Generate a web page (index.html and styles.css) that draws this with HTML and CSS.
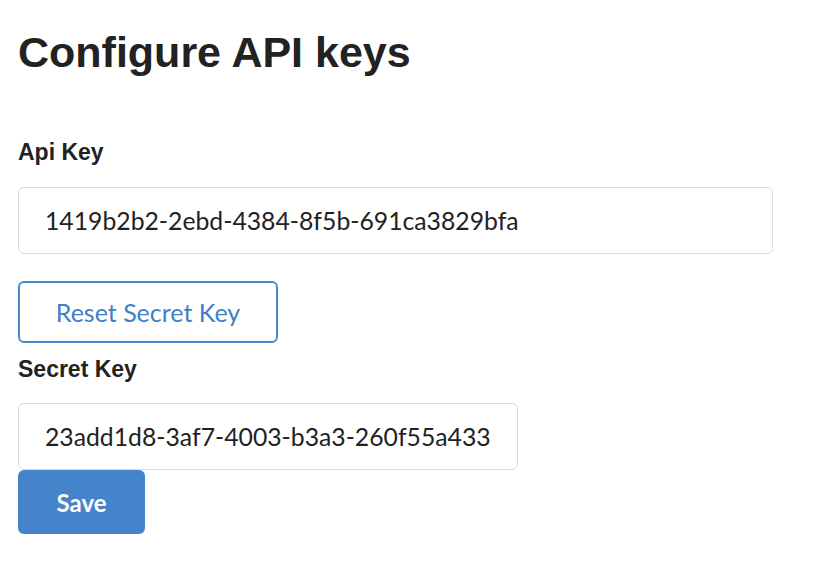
FILE: index.html
```html
<!DOCTYPE html>
<html>
<head>
<meta charset="utf-8">
<link rel="stylesheet" href="styles.css">
</head>
<body>
<main class="page">
  <h1 class="title">Configure API keys</h1>
  <form class="form">
    <label class="label label-api" for="api">Api Key</label>
    <input class="field field-wide" id="api" type="text" value="1419b2b2-2ebd-4384-8f5b-691ca3829bfa">
    <button type="button" class="btn btn-outline">Reset Secret Key</button>
    <label class="label label-secret" for="secret">Secret Key</label>
    <input class="field field-narrow" id="secret" type="text" value="23add1d8-3af7-4003-b3a3-260f55a433">
    <button type="button" class="btn btn-primary">Save</button>
  </form>
</main>
</body>
</html>
```

FILE: styles.css
```css
html, body {
  margin: 0;
  padding: 0;
  background: #ffffff;
}

.page {
  padding: 27px 18px 0 18px;
  color: #222222;
}

.title {
  margin: 0;
  font-family: "Liberation Sans", Arial, sans-serif;
  font-weight: 700;
  font-size: 43px;
  line-height: 50px;
  color: #222222;
}

.form {
  display: flex;
  flex-direction: column;
  align-items: flex-start;
}

.label {
  font-family: "Liberation Sans", Arial, sans-serif;
  font-weight: 700;
  font-size: 23px;
  line-height: 23px;
  color: #222222;
}

.label-api {
  margin-top: 64px;
  margin-bottom: 23px;
}

.label-secret {
  margin-top: 15px;
  margin-bottom: 22px;
}

.field {
  box-sizing: border-box;
  margin: 0;
  height: 67px;
  padding: 0 0 0 26px;
  border: 1px solid #dcdcdc;
  border-radius: 6px;
  background: #ffffff;
  font-family: Lato, "Open Sans", sans-serif;
  font-size: 24.75px;
  color: #222222;
  outline: none;
}

.field-wide {
  width: 755px;
}

.field-narrow {
  width: 500px;
}

.btn {
  box-sizing: border-box;
  margin: 0;
  border-radius: 6px;
  font-family: Lato, "Open Sans", sans-serif;
  font-size: 25px;
  cursor: pointer;
}

.btn-outline {
  margin-top: 27px;
  width: 260px;
  height: 62px;
  border: 2px solid #4a88cf;
  background: #ffffff;
  color: #3f7fc8;
}

.btn-primary {
  width: 127px;
  height: 64px;
  border: none;
  background: #4584cb;
  color: #ffffff;
  font-weight: 700;
  font-size: 24px;
}
```
